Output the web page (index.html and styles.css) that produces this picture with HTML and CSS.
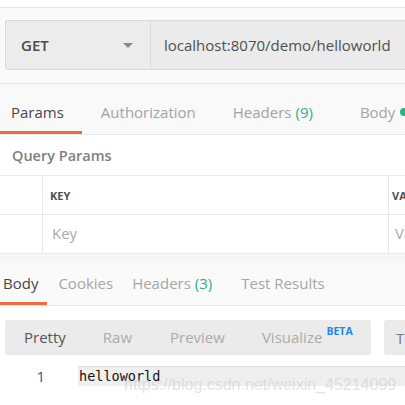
FILE: index.html
```html
<!DOCTYPE html>
<html>
<head>
<meta charset="utf-8">
<link rel="stylesheet" href="styles.css">
</head>
<body>
<div class="page">
  <div class="topstrip"></div>
  <div class="urlrow">
    <div class="method"><span class="method-name">GET</span><span class="caret"></span></div>
    <div class="url">localhost:8070/demo/helloworld</div>
  </div>
  <div class="reqtabs">
    <div class="tab active">Params</div>
    <div class="tab">Authorization</div>
    <div class="tab">Headers <span class="count">(9)</span></div>
    <div class="tab">Body <span class="dot"></span></div>
  </div>
  <div class="query">
    <div class="query-title">Query Params</div>
    <div class="table">
      <div class="row head">
        <div class="cell check"></div>
        <div class="cell key">KEY</div>
        <div class="cell val">VALUE</div>
      </div>
      <div class="row">
        <div class="cell check"></div>
        <div class="cell key placeholder">Key</div>
        <div class="cell val placeholder">Value</div>
      </div>
    </div>
  </div>
  <div class="divider"></div>
  <div class="resptabs">
    <div class="rtab active">Body</div>
    <div class="rtab">Cookies</div>
    <div class="rtab">Headers <span class="count">(3)</span></div>
    <div class="rtab test">Test Results</div>
  </div>
  <div class="viewrow">
    <div class="viewbar">
      <div class="vopt on">Pretty</div>
      <div class="vopt raw">Raw</div>
      <div class="vopt prev">Preview</div>
      <div class="vopt vis">Visualize<sup class="beta">BETA</sup></div>
    </div>
    <div class="viewbar2">Text</div>
  </div>
  <div class="code">
    <div class="lineno">1</div>
    <div class="line">helloworld</div>
  </div>
  <div class="watermark">https://blog.csdn.net/weixin_45214099</div>
</div>
</body>
</html>
```
FILE: styles.css
```css
html, body {
  margin: 0;
  padding: 0;
  background: #ffffff;
  overflow: hidden;
}
.page {
  position: relative;
  width: 405px;
  height: 405px;
  overflow: hidden;
  font-family: "Open Sans", "DejaVu Sans", sans-serif;
  color: #505050;
}
.topstrip {
  height: 7px;
  background: #ffffff;
  border-bottom: 1px solid #e6e6e6;
}
.urlrow {
  display: flex;
  padding: 12px 0 13px 5px;
  background: #fafafa;
  border-bottom: 1px solid #e6e6e6;
  width: 500px;
}
.method {
  box-sizing: border-box;
  width: 146px;
  height: 50px;
  display: flex;
  align-items: center;
  justify-content: space-between;
  padding: 0 17px 0 15px;
  background: #ececec;
  border: 1px solid #d9d9d9;
  border-right: 1px solid #dcdcdc;
  border-radius: 3px 0 0 3px;
  font-size: 15px;
  color: #4a4a4a;
}
.method-name {
  font-weight: 600;
}
.caret {
  width: 0;
  height: 0;
  border-left: 5px solid transparent;
  border-right: 5px solid transparent;
  border-top: 5px solid #8a8a8a;
}
.url {
  box-sizing: border-box;
  height: 50px;
  flex: 1;
  display: flex;
  align-items: center;
  padding-left: 13px;
  background: #ebebeb;
  border: 1px solid #d9d9d9;
  border-left: none;
  font-size: 15px;
  color: #4f4f4f;
}
.reqtabs {
  display: flex;
  height: 50px;
  background: #f9f9f9;
  border-bottom: 1px solid #e8e8e8;
  margin-left: -8px;
  white-space: nowrap;
}
.tab {
  box-sizing: border-box;
  height: 50px;
  display: flex;
  align-items: center;
  padding: 8px 19px 0 19px;
  font-size: 15px;
  color: #a3a3a3;
  border-bottom: 3px solid transparent;
  flex-shrink: 0;
}
.tab.active {
  color: #474747;
  border-bottom-color: #f26b3a;
  padding-right: 18px;
}
.tab:nth-child(3) {
  padding-left: 18px;
}
.tab:nth-child(4) {
  padding-left: 28px;
}
.count {
  color: #26b47f;
  margin-left: 4px;
}
.dot {
  display: inline-block;
  width: 8px;
  height: 8px;
  border-radius: 50%;
  background: #26b47f;
  margin-left: 5px;
}
.query {
  background: #ffffff;
  padding-top: 9px;
}
.query-title {
  padding-left: 12px;
  height: 31px;
  font-size: 14.5px;
  font-weight: 600;
  color: #808080;
  line-height: 24px;
}
.table {
  border-top: 1px solid #e8e8e8;
}
.row {
  display: flex;
  height: 38px;
  border-bottom: 1px solid #e8e8e8;
  white-space: nowrap;
}
.cell {
  display: flex;
  align-items: center;
  box-sizing: border-box;
  flex-shrink: 0;
}
.check {
  width: 43px;
  border-right: 1px solid #e8e8e8;
}
.key {
  width: 346px;
  border-right: 1px solid #e8e8e8;
  padding-left: 7px;
}
.val {
  padding-left: 3px;
}
.head .cell {
  font-size: 11px;
  font-weight: 700;
  color: #505050;
  padding-top: 1px;
}
.placeholder {
  font-size: 15px;
  color: #aaaaaa;
  padding-left: 9px;
  padding-bottom: 3px;
}
.row .val.placeholder {
  padding-left: 6px;
}
.divider {
  height: 8px;
  background: #f6f6f6;
}
.resptabs {
  display: flex;
  height: 43px;
  background: #fafafa;
  border-bottom: 1px solid #e6e6e6;
  margin-left: -8px;
  white-space: nowrap;
}
.rtab {
  box-sizing: border-box;
  height: 43px;
  display: flex;
  align-items: center;
  padding: 2px 10px 0 11px;
  font-size: 15px;
  color: #a6a6a6;
  border-bottom: 3px solid transparent;
  flex-shrink: 0;
}
.rtab.active {
  color: #474747;
  border-bottom-color: #f26b3a;
  padding-right: 9px;
}
.rtab:nth-child(2) {
  padding-right: 9px;
}
.rtab:nth-child(3) {
  padding-left: 10px;
}
.rtab.test {
  padding-left: 19px;
}
.viewrow {
  display: flex;
  gap: 13px;
  padding: 14px 0 0 5px;
  width: 500px;
  background: #ffffff;
}
.viewbar {
  width: 366px;
  height: 35px;
  flex-shrink: 0;
  background: #ebebeb;
  border-radius: 3px;
  display: flex;
  align-items: center;
  font-size: 15px;
  white-space: nowrap;
}
.vopt {
  color: #ababab;
  padding-bottom: 1px;
}
.vopt.on {
  color: #555555;
  margin-left: 19px;
}
.vopt.raw {
  margin-left: 37px;
}
.vopt.prev {
  margin-left: 38px;
}
.vopt.vis {
  margin-left: 37px;
}
.beta {
  font-size: 10.5px;
  font-weight: 700;
  color: #1f87e5;
  margin-left: 4px;
  vertical-align: 8px;
  line-height: 0;
}
.viewbar2 {
  width: 60px;
  height: 35px;
  background: #ebebeb;
  border-radius: 3px;
  display: flex;
  align-items: center;
  padding-left: 12px;
  font-size: 15px;
  color: #777;
}
.code {
  display: flex;
  align-items: center;
  margin-top: 11px;
  height: 20px;
  white-space: nowrap;
}
.lineno {
  width: 45px;
  flex-shrink: 0;
  font-family: "Open Sans", sans-serif;
  font-size: 15px;
  color: #1d5a96;
  text-align: right;
}
.line {
  margin-left: 33px;
  flex: 1;
  height: 20px;
  line-height: 19px;
  background: #efefef;
  box-sizing: border-box;
  border-top: 1px solid #e2e2e2;
  padding-left: 1px;
  font-family: "DejaVu Sans Mono", monospace;
  font-size: 13.5px;
  color: #111111;
}
.watermark {
  position: absolute;
  left: 124px;
  top: 376px;
  font-family: "Liberation Sans", sans-serif;
  font-size: 16px;
  color: rgba(200, 200, 200, 0.5);
  white-space: nowrap;
}
```
